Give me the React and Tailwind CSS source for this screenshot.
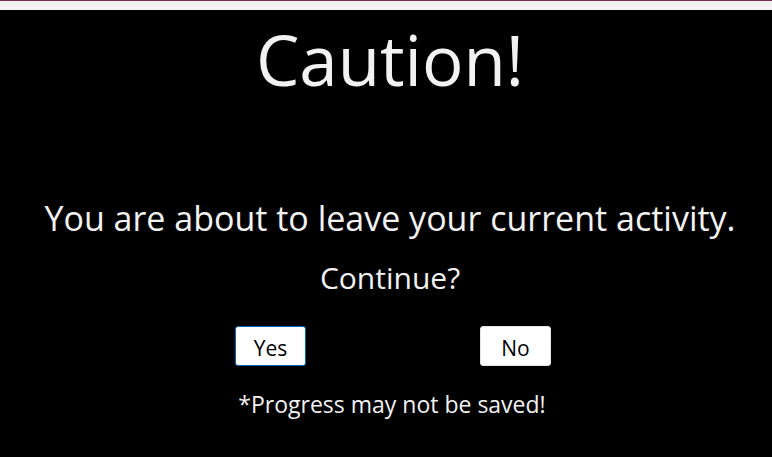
export default function App() {
  return (
    <div className="w-[772px] h-[457px] bg-[#f2f2f2] flex flex-col overflow-hidden font-['Open_Sans',sans-serif]">
      {/* top strip */}
      <div className="h-[10px] border-t border-[#7b2d55] bg-[#f2f2f2]" />

      <div className="flex-1 bg-black text-[#f2f2f2] flex flex-col items-center pl-[8px]">
        <h1 className="text-[69px] leading-none mt-[15px] font-normal">Caution!</h1>

        <p className="text-[34px] leading-none mt-[107px]">
          You are about to leave your current activity.
        </p>

        <p className="text-[30px] leading-none mt-[28px]">Continue?</p>

        <div className="flex gap-[174px] mt-[33px] ml-[6px]">
          <button className="w-[71px] h-[40px] pt-[6px] bg-white text-black text-[21px] rounded-[3px] border border-[#0067c0]">
            Yes
          </button>
          <button className="w-[71px] h-[40px] pt-[6px] bg-white text-black text-[21px] rounded-[3px] border border-[#e5e5e5]">
            No
          </button>
        </div>

        <p className="text-[23px] leading-none mt-[27px] ml-[4px]">*Progress may not be saved!</p>
      </div>
    </div>
  );
}
